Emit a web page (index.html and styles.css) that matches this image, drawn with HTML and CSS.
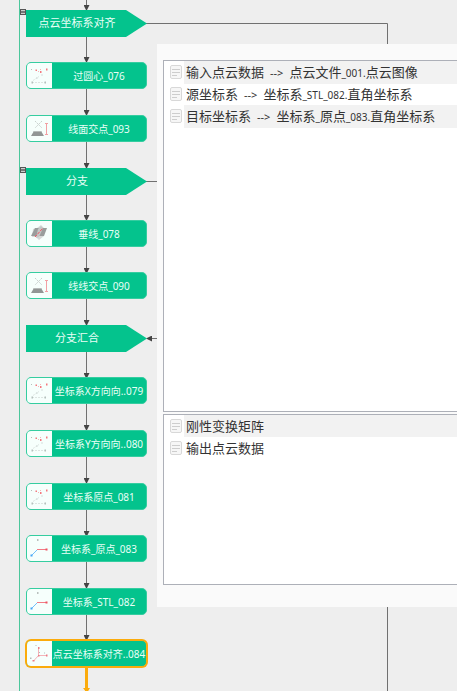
FILE: index.html
```html
<!DOCTYPE html>
<html lang="zh">
<head>
<meta charset="utf-8">
<title>流程</title>
<link rel="stylesheet" href="styles.css">
</head>
<body>
<svg class="defs" aria-hidden="true">
  <defs>
    <symbol id="points" viewBox="0 0 25 25">
      <path d="M5 19.500h13M6 17.500l6-4" stroke="#dde5e2" fill="none" stroke-dasharray="2 1"/>
      <path d="M8.500 6.500h1.500v1.500H8.500zM13 8h1.500v2H13zM19 5.500h1.500v2H19z" fill="#f4787e"/>
      <path d="M11 8h1v1h-1zM13 6h1v1h-1z" fill="#f5b5b7"/>
      <path d="M4 6h1v1H4zM9.500 14.500h1v1h-1zM4.500 18.500h1.500v2H4.500zM17.500 18.500h1.500v2h-1.500zM14.500 11.500h1v1h-1z" fill="#b4c0bc"/>
    </symbol>
    <symbol id="cross" viewBox="0 0 25 25">
      <path d="M8 5l7 7M15 5l-7 7" stroke="#c8d0cd" stroke-dasharray="2 1" fill="none"/>
      <path d="M7 15h7l3 5H4z" fill="#929695"/>
      <path d="M7 15h7l1 1H6z" fill="#b6bbb9"/>
      <path d="M19.500 8v10M18 7.500h3M18 18.500h3" stroke="#f2a0a4" fill="none"/>
    </symbol>
    <symbol id="plane" viewBox="0 0 25 25">
      <path d="M6 8l4-1 4-3 3 3v8l-5 4-3-3H5z" fill="#d6d9d8"/>
      <path d="M8 7h12l-3 8H4z" fill="#999d9c"/>
      <path d="M14 5l2 2-4 9-3 1 2-9z" fill="#c3c7c5"/>
      <path d="M8 16l8-9" stroke="#ef5360" stroke-dasharray="3 1"/>
    </symbol>
    <symbol id="axes" viewBox="0 0 25 25">
      <path d="M10 3h1.500v2H10z" fill="#b8c0bd"/>
      <path d="M10.500 13.500L5 19" stroke="#74c0fa"/>
      <path d="M3.500 18.500h2v2h-2z" fill="#42a5f5"/>
      <path d="M10 13.500h9" stroke="#f27b85"/>
      <path d="M18.500 12.500h2v2h-2z" fill="#ee5361"/>
    </symbol>
    <symbol id="align" viewBox="0 0 25 25">
      <path d="M11.500 14.500V7M11.500 14.500H20M11.500 14.500L6.500 20" stroke="#f4b3b8" fill="none"/>
      <path d="M11 6h1.500v2H11zM19 13.500h1.500v2H19zM5.500 19h2v1.500h-2zM11 14h1.500v1.500H11z" fill="#ec7b84"/>
      <path d="M8.500 4h1v1h-1zM12 11h1v1h-1zM17 11.500h1v1h-1zM3 16.500h1.500v1.500H3z" fill="#b4bdba"/>
    </symbol>
    <symbol id="doc" viewBox="0 0 12 14">
      <rect x=".5" y=".5" width="11" height="13" rx="1.500" fill="#f6f6f6" stroke="#d8d8d8"/>
      <path d="M2 4.500h8M2 7.500h8M2 10.500h5" stroke="#cdcdcd"/>
    </symbol>
    <marker id="head" viewBox="0 0 6 6" markerWidth="6" markerHeight="6" refX="5" refY="3" orient="auto" markerUnits="userSpaceOnUse">
      <path class="tip" d="M0 0l6 3-6 3z"/>
    </marker>
  </defs>
</svg>

<main class="canvas">
  <svg class="edges" aria-hidden="true">
    <path class="lane" d="M19.500 0V691"/>
    <g class="edge">
      <path class="arrow" d="M86.500 0V10"/>
      <path class="arrow" d="M86.500 36V62"/>
      <path class="arrow" d="M86.500 89V115"/>
      <path class="arrow" d="M86.500 141V168"/>
      <path class="arrow" d="M86.500 194V220"/>
      <path class="arrow" d="M86.500 246V273"/>
      <path class="arrow" d="M86.500 299V325"/>
      <path class="arrow" d="M86.500 352V378"/>
      <path class="arrow" d="M86.500 404V430"/>
      <path class="arrow" d="M86.500 457V483"/>
      <path class="arrow" d="M86.500 509V536"/>
      <path class="arrow" d="M86.500 562V588"/>
      <path class="arrow" d="M86.500 614V640"/>
      <path d="M146 23.500H387.500V691"/>
      <path d="M146 181.500H170"/>
      <path class="arrow" d="M170 338.500H147"/>
    </g>
    <path class="active-edge" d="M86.500 667V691"/>
    <path class="active-head" d="M83 688h7l-3 5z"/>
  </svg>

  <div class="step branch s1">点云坐标系对齐</div>
  <div class="step node s2"><svg><use href="#points"/></svg><span>过圆心_076</span></div>
  <div class="step node s3"><svg><use href="#cross"/></svg><span>线面交点_093</span></div>
  <div class="step branch s4">分支</div>
  <div class="step node s5"><svg><use href="#plane"/></svg><span>垂线_078</span></div>
  <div class="step node s6"><svg><use href="#cross"/></svg><span>线线交点_090</span></div>
  <div class="step branch s7">分支汇合</div>
  <div class="step node s8"><svg><use href="#points"/></svg><span>坐标系X方向向..079</span></div>
  <div class="step node s9"><svg><use href="#points"/></svg><span>坐标系Y方向向..080</span></div>
  <div class="step node s10"><svg><use href="#points"/></svg><span>坐标系原点_081</span></div>
  <div class="step node s11"><svg><use href="#axes"/></svg><span>坐标系_原点_083</span></div>
  <div class="step node s12"><svg><use href="#axes"/></svg><span>坐标系_STL_082</span></div>
  <div class="step node selected s13"><svg><use href="#align"/></svg><span>点云坐标系对齐..084</span></div>

  <button class="fold f1" aria-label="折叠"></button>
  <button class="fold f2" aria-label="折叠"></button>

  <section class="panel">
    <ul class="list inputs">
      <li><svg><use href="#doc"/></svg><span class="text">输入点云数据<span class="link">--&gt;</span>点云文件<small>_001.</small>点云图像</span></li>
      <li><svg><use href="#doc"/></svg><span class="text">源坐标系<span class="link">--&gt;</span>坐标系<small>_STL_082.</small>直角坐标系</span></li>
      <li><svg><use href="#doc"/></svg><span class="text">目标坐标系<span class="link">--&gt;</span>坐标系<small>_</small>原点<small>_083.</small>直角坐标系</span></li>
    </ul>
    <ul class="list outputs">
      <li><svg><use href="#doc"/></svg><span class="text">刚性变换矩阵</span></li>
      <li><svg><use href="#doc"/></svg><span class="text">输出点云数据</span></li>
    </ul>
  </section>
</main>
</body>
</html>
```
FILE: styles.css
```css
* {
  box-sizing: border-box;
}

body {
  margin: 0;
  background: #eee;
  font-family: "Noto Sans", "Noto Sans CJK SC", sans-serif;
}

.defs {
  position: absolute;
  width: 0;
  height: 0;
}

.canvas {
  position: relative;
  min-height: 100vh;
  overflow: hidden;
}

.edges {
  position: absolute;
  inset: 0;
  width: 100%;
  height: 100%;
}

.lane {
  stroke: #4cc79c;
}

.edge path {
  fill: none;
  stroke: #707070;
}

.edge .arrow {
  marker-end: url(#head);
}

.tip {
  fill: #444;
}

.active-edge {
  stroke: #fbab0c;
  stroke-width: 3;
}

.active-head {
  fill: #fbab0c;
}

/* Diagram nodes */
.step {
  position: absolute;
  left: 26px;
  width: 121px;
  height: 27px;
  color: #e9fff7;
  line-height: 26px;
  text-align: center;
  white-space: nowrap;
  background: #04c38d;
}

.branch {
  padding-right: 19px;
  font-size: 11px;
  clip-path: polygon(0 0, 100px 0, 100% 50%, 100px 100%, 0 100%);
}

.node {
  display: flex;
  border: 1px solid #35cda0;
  border-radius: 5px;
  overflow: hidden;
  font-size: 10px;
}

.node svg {
  flex: none;
  width: 25px;
  height: 25px;
  background: #f6fffc;
}

.node span {
  flex: 1;
}

.selected {
  box-shadow: 0 0 0 1px #fbab0c;
  border-color: #fbab0c;
}

.s1 { top: 10px; }
.s2 { top: 62px; }
.s3 { top: 115px; }
.s4 { top: 168px; }
.s5 { top: 220px; }
.s6 { top: 272px; }
.s7 { top: 325px; }
.s8 { top: 377px; }
.s9 { top: 430px; }
.s10 { top: 483px; }
.s11 { top: 535px; }
.s12 { top: 588px; }
.s13 { top: 640px; }

.fold {
  position: absolute;
  left: 20px;
  width: 6px;
  height: 6px;
  padding: 0;
  border: 1px solid #555;
  background: linear-gradient(#ccc 1px, #777 1px 3px, #ccc 3px);
}

.f1 { top: 9px; }
.f2 { top: 167px; }

/* Floating parameter panel */
.panel {
  position: absolute;
  top: 44px;
  left: 157px;
  right: 0;
  display: flex;
  flex-direction: column;
  gap: 2px;
  padding: 16px 0 22px 6px;
  background: #fafafa;
}

.list {
  margin: 0;
  padding: 0 0 0 6px;
  border: 1px solid #adb0b8;
  border-right: 0;
  background: #fff;
  list-style: none;
}

.inputs {
  min-height: 352px;
}

.outputs {
  min-height: 171px;
}

.list li {
  display: flex;
  align-items: center;
  gap: 2px;
  height: 22px;
}

.list svg {
  width: 12px;
  height: 14px;
}

.text {
  flex: 1;
  padding-left: 2px;
  color: #333;
  font-size: 13px;
  line-height: 22px;
  white-space: nowrap;
}

.list li:nth-child(odd) .text {
  background: #f2f2f2;
}

.text small {
  font-size: 10px;
}

.link {
  margin: 0 6px;
  font-size: 11px;
}
```
